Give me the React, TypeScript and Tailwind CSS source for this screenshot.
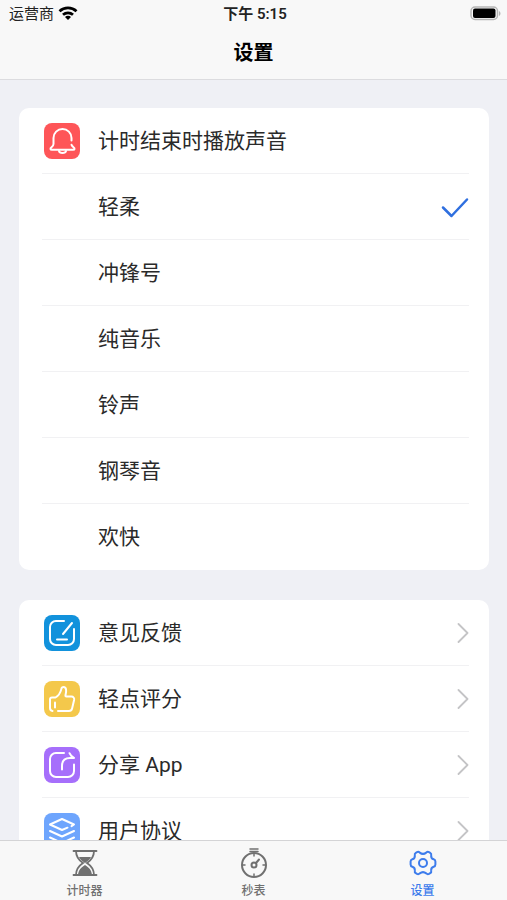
import { useState } from 'react';
import type { ReactNode } from 'react';

const SOUNDS = ['轻柔', '冲锋号', '纯音乐', '铃声', '钢琴音', '欢快'];

const iconProps = {
  viewBox: '0 0 36 36',
  fill: 'none',
  stroke: '#fff',
  strokeWidth: 2,
  strokeLinecap: 'round',
  strokeLinejoin: 'round',
  className: 'w-9 h-9',
  'aria-hidden': true,
} as const;

function BellIcon() {
  return (
    <svg {...iconProps}>
      <path d="M27.5 17.5V15a9 9 0 0 0-18 0v6c0 1.300-.7 2.200-2 3.200-1.600 1.200-1.300 2.600.5 2.600h21c1.800 0 2.100-1.400.5-2.600-1.200-.9-1.800-1.500-2-2.400" />
      <path d="M15 28c.6 2.600 6.400 2.600 7 0" />
    </svg>
  );
}

function EditIcon() {
  return (
    <svg {...iconProps}>
      <path d="M20 6h-8a6 6 0 0 0-6 6v12a6 6 0 0 0 6 6h12a6 6 0 0 0 6-6V14" />
      <path d="M28 8l-9 11M13 24.500h10" />
    </svg>
  );
}

function ThumbIcon() {
  return (
    <svg {...iconProps}>
      <path d="M14 30h11c1.700 0 2.700-.9 3.100-2.500l2-8.500c.4-2-.8-3.500-2.700-3.500h-5c-.8 0-1.100-.5-.9-1.300.5-1.900.8-3.700.6-5.400-.2-1.900-1.300-2.800-2.600-2.800-1.200 0-1.900.8-2.200 2.100-.9 4-2.800 6.600-5.800 8.400H8c-1.200 0-2 .8-2 2v8.500c0 1.800.9 2.700 2.500 2.900" />
      <path d="M11 21.500v5" />
    </svg>
  );
}

function ShareIcon() {
  return (
    <svg {...iconProps}>
      <path d="M20 6h-8a6 6 0 0 0-6 6v12a6 6 0 0 0 6 6h12a6 6 0 0 0 6-6v-6.500" />
      <path d="M18 22.500V19c0-5 3-8 8-8h4c-2-1-3.500-2.500-4.500-4.800" />
    </svg>
  );
}

function LayersIcon() {
  return (
    <svg {...iconProps}>
      <path d="M27.500 13.200l2.500-1.700L18 6 6 11.500 18 17l5.500-2.300" />
      <path d="M6 18l12 5.500L30 18M6 24.500L18 30l12-5.500" />
    </svg>
  );
}

function CheckIcon() {
  return (
    <svg className="w-7 h-6" viewBox="0 0 28 24" fill="none" stroke="#2f6fdf" strokeWidth="2.500" strokeLinecap="round" strokeLinejoin="round" aria-hidden>
      <path d="M2 12.500l8.500 8.500L26 4.500" />
    </svg>
  );
}

function ChevronIcon() {
  return (
    <svg className="w-3 h-5" viewBox="0 0 12 20" fill="none" stroke="#c4c4c6" strokeWidth="1.800" strokeLinecap="round" strokeLinejoin="round" aria-hidden>
      <path d="M1.500 1l9 9-9 9" />
    </svg>
  );
}

function HourglassIcon() {
  return (
    <svg className="w-7 h-7" viewBox="0 0 28 28" fill="none" stroke="currentColor" strokeWidth="1.800" strokeLinecap="round" aria-hidden>
      <path d="M2.500 2h23M2.500 26h23" />
      <path d="M5 2c0 6 2.500 9 7 12-4.500 3-7 6-7 12M23 2c0 6-2.500 9-7 12 4.500 3 7 6 7 12" />
      <path d="M8 8h12c-1.200 2.500-3 4-6 6-3-2-4.800-3.500-6-6zM14 16c4 2.500 6.500 5 7 10H7c.5-5 3-7.500 7-10z" fill="currentColor" stroke="none" />
    </svg>
  );
}

function StopwatchIcon() {
  return (
    <svg className="w-7 h-8" viewBox="0 0 28 32" fill="none" stroke="currentColor" strokeWidth="2" strokeLinecap="round" aria-hidden>
      <path d="M10 2h8M10 4.500h8" strokeWidth="1.500" />
      <circle cx="14" cy="18" r="12" />
      <circle cx="14" cy="18" r="2.500" />
      <path d="M16 16l3-3.500" />
      <path d="M14 7v2M14 27v2M3 18h2M23 18h2" strokeWidth="1.500" />
    </svg>
  );
}

function GearIcon() {
  return (
    <svg className="w-7 h-7" viewBox="0 0 28 28" fill="none" stroke="currentColor" strokeWidth="2" strokeLinejoin="round" aria-hidden>
      <path d="M10.800 3.600Q9.500 2.300 8 3.100L6.800 3.800Q5.400 4.600 5.800 6.300Q6.200 9.500 3.300 10.300Q1.600 10.800 1.600 12.500V15.500Q1.600 17.200 3.300 17.700Q6.200 18.500 5.800 21.700Q5.400 23.400 6.800 24.200L8 24.900Q9.500 25.700 10.800 24.400Q14 21.800 17.200 24.400Q18.500 25.700 20 24.900L21.200 24.200Q22.600 23.400 22.200 21.700Q21.800 18.500 24.700 17.700Q26.400 17.200 26.400 15.500V12.500Q26.400 10.800 24.700 10.300Q21.800 9.500 22.200 6.300Q22.600 4.600 21.200 3.800L20 3.100Q18.500 2.300 17.200 3.600Q14 6.200 10.800 3.600z" />
      <circle cx="14" cy="14" r="4" />
    </svg>
  );
}

function StatusBar() {
  return (
    <div className="grid grid-cols-3 items-center h-7 pl-[9px] pr-[6px] text-[15px] text-[#222]">
      <div className="flex items-center gap-1">
        <span>运营商</span>
        <svg className="w-5 h-4" viewBox="0 0 20 16" fill="none" stroke="#000" strokeWidth="2.800" aria-hidden>
          <path d="M1.500 5.200a12.500 12.500 0 0 1 17 0M5 8.800a7.500 7.500 0 0 1 10 0" />
          <path d="M10 14l-3-3a4.200 4.200 0 0 1 6 0z" fill="#000" stroke="none" />
        </svg>
      </div>
      <div className="text-center font-semibold whitespace-nowrap">下午 5:15</div>
      <svg className="w-[31px] h-4 justify-self-end" viewBox="0 0 31 16" aria-hidden>
        <rect x="1" y="1" width="26.500" height="12.500" rx="4" fill="#f8f8f8" stroke="#b5b5b5" strokeWidth="1.500" />
        <rect x="3" y="2.500" width="22.500" height="9.500" rx="2" fill="#000" />
        <path d="M29 5v5c2-1 2-4 0-5z" fill="#b5b5b5" />
      </svg>
    </div>
  );
}

function Card({ children }: { children: ReactNode }) {
  return (
    <div className="bg-white rounded-[10px] pl-[23px] pr-5 divide-y divide-[#f1f1f3] text-[21px]">
      {children}
    </div>
  );
}

function IconTile({ color, children }: { color: string; children: ReactNode }) {
  return <span className={`w-9 h-9 shrink-0 rounded-lg ${color}`}>{children}</span>;
}

const LINKS = [
  { label: '意见反馈', color: 'bg-[#1292dc]', icon: <EditIcon /> },
  { label: '轻点评分', color: 'bg-[#f4c84b]', icon: <ThumbIcon /> },
  { label: '分享 App', color: 'bg-[#a66ffb]', icon: <ShareIcon /> },
  { label: '用户协议', color: 'bg-[#6ea5fd]', icon: <LayersIcon /> },
];

const TABS = [
  { id: 'timer', label: '计时器', icon: <HourglassIcon /> },
  { id: 'stopwatch', label: '秒表', icon: <StopwatchIcon /> },
  { id: 'settings', label: '设置', icon: <GearIcon /> },
];

export default function App() {
  const [sound, setSound] = useState('轻柔');
  const [tab, setTab] = useState('settings');

  return (
    <div className="h-screen flex flex-col bg-[#eff0f5] text-[#2a2a2a] font-['Roboto','Noto_Sans_CJK_SC',sans-serif]">
      <header className="shrink-0 h-20 bg-[#f8f8f8] border-b border-[#dcdcdf]">
        <StatusBar />
        <h1 className="text-center text-xl leading-[50px] font-bold text-black">设置</h1>
      </header>

      <main className="flex-1 min-h-0 overflow-y-auto [scrollbar-width:none] pl-[19px] pr-[18px] pt-7 space-y-[30px]">
        <Card>
          <div className="flex items-center gap-[18px] h-[66px] pl-0.5">
            <IconTile color="bg-[#fe5558]"><BellIcon /></IconTile>
            <h2 className="pt-0.5">计时结束时播放声音</h2>
          </div>
          {SOUNDS.map((name) => (
            <label key={name} className="relative flex items-center justify-between h-[66px] pl-14 cursor-pointer">
              <span className="pt-0.5">{name}</span>
              <input
                type="radio"
                name="sound"
                className="sr-only"
                checked={sound === name}
                onChange={() => setSound(name)}
              />
              {sound === name && <CheckIcon />}
            </label>
          ))}
        </Card>

        <Card>
          {LINKS.map(({ label, color, icon }) => (
            <button key={label} type="button" className="flex w-full items-center gap-[18px] h-[66px] pl-0.5 text-left">
              <IconTile color={color}>{icon}</IconTile>
              <span className="flex-1 pt-0.5">{label}</span>
              <ChevronIcon />
            </button>
          ))}
        </Card>
      </main>

      <nav className="shrink-0 grid grid-cols-3 h-[60px] bg-[#f8f8f8] border-t border-[#d4d4d6]">
        {TABS.map(({ id, label, icon }) => (
          <button
            key={id}
            type="button"
            onClick={() => setTab(id)}
            className={`flex flex-col items-center gap-0.5 pt-1.5 text-xs font-medium ${tab === id ? 'text-[#3d7cec]' : 'text-[#707070]'}`}
          >
            <span className="flex items-center justify-center h-8">{icon}</span>
            <span className="leading-5">{label}</span>
          </button>
        ))}
      </nav>
    </div>
  );
}
